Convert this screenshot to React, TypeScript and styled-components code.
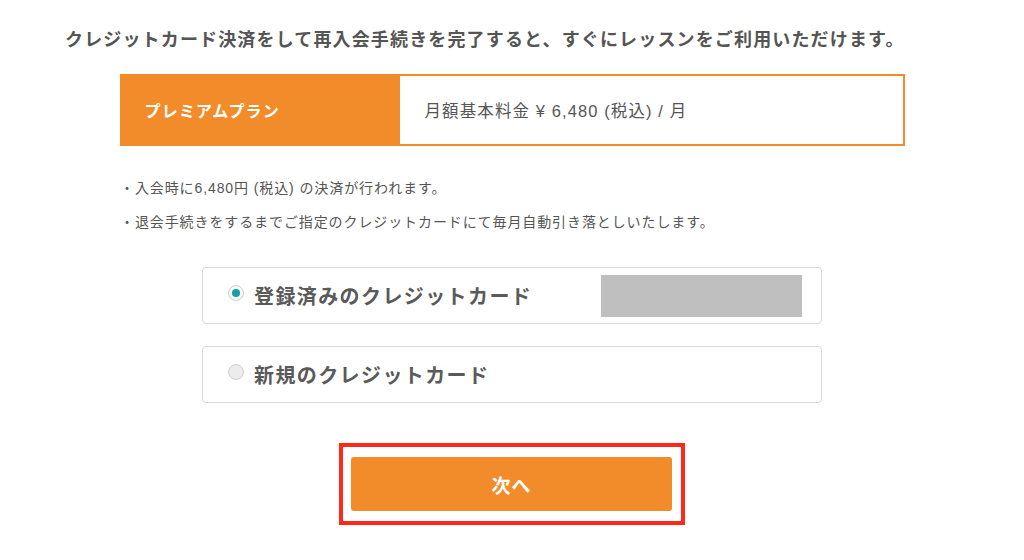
import styled, { createGlobalStyle } from "styled-components";

const GlobalStyle = createGlobalStyle`
  body {
    margin: 0;
    background: #fff;
    font-family: "Liberation Sans", "Noto Sans CJK JP", sans-serif;
    color: #555;
  }
`;

const Page = styled.div`
  width: 1024px;
  height: 560px;
  overflow: hidden;
  display: flex;
  flex-direction: column;
  align-items: center;
  padding-top: 27px;
  box-sizing: border-box;
`;

const Lead = styled.p`
  margin: 0;
  width: 960px;
  padding-left: 65px;
  box-sizing: border-box;
  align-self: flex-start;
  font-size: 18px;
  font-weight: 700;
  line-height: 27px;
  letter-spacing: 1.15px;
  color: #555;
  white-space: nowrap;
`;

const PlanTable = styled.div`
  margin-top: 20px;
  width: 785px;
  height: 72px;
  display: flex;
`;

const PlanName = styled.div`
  width: 280px;
  background: #f28c2a;
  color: #fff;
  font-size: 16px;
  font-weight: 700;
  display: flex;
  align-items: center;
  padding-left: 25px;
  box-sizing: border-box;
  letter-spacing: 1.2px;
`;

const PlanPrice = styled.div`
  flex: 1;
  border: 2px solid #f28c2a;
  border-left: none;
  display: flex;
  align-items: center;
  padding-left: 25px;
  font-size: 16.5px;
  letter-spacing: 1.1px;
  color: #555;
`;

const Notes = styled.ul`
  list-style: none;
  margin: 25px 0 0;
  padding: 0 0 0 120px;
  width: 100%;
  box-sizing: border-box;
`;

const Note = styled.li`
  font-size: 14px;
  line-height: 34px;
  letter-spacing: 0.9px;
  color: #555;
`;

const Options = styled.div`
  margin-top: 28px;
  display: flex;
  flex-direction: column;
  gap: 22px;
`;

const Option = styled.label`
  width: 620px;
  height: 57px;
  border: 1px solid #d9d9d9;
  border-radius: 4px;
  box-sizing: border-box;
  display: flex;
  align-items: center;
  padding-left: 25px;
  gap: 10px;
`;

const Radio = styled.span<{ $checked?: boolean }>`
  width: 16px;
  height: 16px;
  border-radius: 50%;
  border: 1px solid #cfcfcf;
  background: ${(p) => (p.$checked ? "#f7f7f7" : "#ececec")};
  box-sizing: border-box;
  display: flex;
  align-items: center;
  justify-content: center;
  margin-top: -6px;
  &::after {
    content: "";
    display: ${(p) => (p.$checked ? "block" : "none")};
    width: 8px;
    height: 8px;
    border-radius: 50%;
    background: #14a0a4;
  }
`;

const OptionText = styled.span`
  font-size: 20px;
  font-weight: 700;
  letter-spacing: 1.4px;
  color: #5a5a5a;
  width: 337px;
`;

const Masked = styled.div`
  width: 201px;
  height: 42px;
  background: #bfbfbf;
`;

const Highlight = styled.div`
  margin-top: 40px;
  border: 4px solid #ff2a1a;
  padding: 10px 9px 10px 8px;
`;

const NextButton = styled.button`
  width: 321px;
  height: 54px;
  border: none;
  border-radius: 3px;
  background: #f28c2a;
  color: #fff;
  font-family: inherit;
  font-size: 19px;
  font-weight: 700;
  letter-spacing: 1px;
  display: block;
  cursor: pointer;
`;

export default function App() {
  return (
    <>
      <GlobalStyle />
      <Page>
        <Lead>
          クレジットカード決済をして再入会手続きを完了すると、すぐにレッスンをご利用いただけます。
        </Lead>
        <PlanTable>
          <PlanName>プレミアムプラン</PlanName>
          <PlanPrice>月額基本料金 ¥ 6,480 (税込) / 月</PlanPrice>
        </PlanTable>
        <Notes>
          <Note>・入会時に6,480円 (税込) の決済が行われます。</Note>
          <Note>
            ・退会手続きをするまでご指定のクレジットカードにて毎月自動引き落としいたします。
          </Note>
        </Notes>
        <Options>
          <Option>
            <Radio $checked />
            <OptionText>登録済みのクレジットカード</OptionText>
            <Masked />
          </Option>
          <Option>
            <Radio />
            <OptionText>新規のクレジットカード</OptionText>
          </Option>
        </Options>
        <Highlight>
          <NextButton>次へ</NextButton>
        </Highlight>
      </Page>
    </>
  );
}
